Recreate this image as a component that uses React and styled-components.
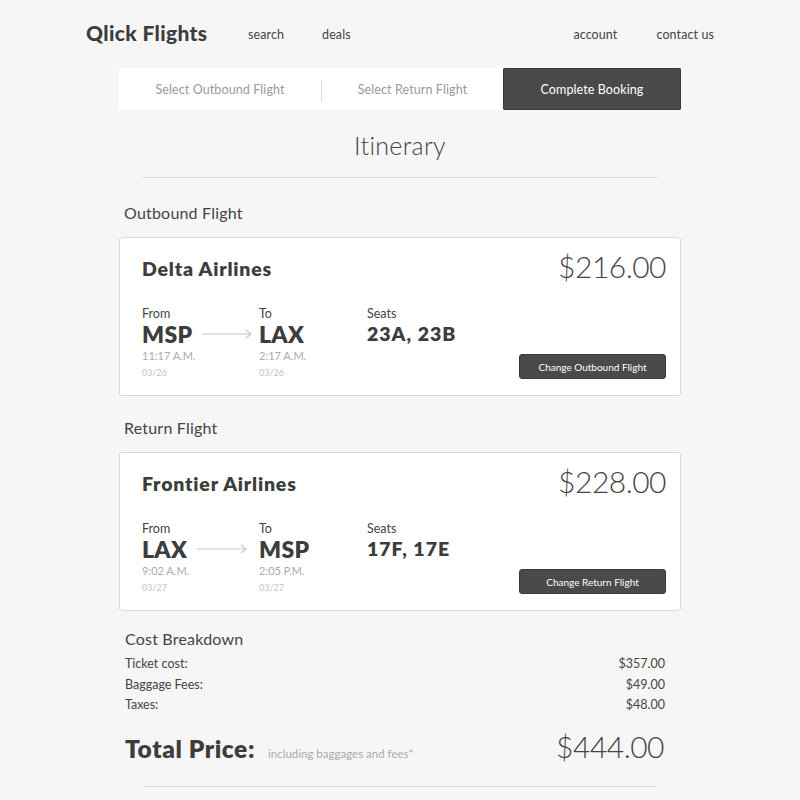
import React from "react";
import styled, { createGlobalStyle } from "styled-components";

const Global = createGlobalStyle`
  html, body { margin: 0; padding: 0; background: #f6f6f6; }
  body { font-family: Lato, "Open Sans", "Liberation Sans", sans-serif; color: #444; }
  * { box-sizing: border-box; }
`;

const Page = styled.div`
  width: 800px;
  padding-top: 18px;
  display: flex;
  flex-direction: column;
  align-items: center;
`;

const Header = styled.header`
  width: 628px;
  display: flex;
  align-items: center;
  height: 28px;
`;

const Logo = styled.div`
  font-family: Lato, sans-serif;
  font-weight: 900;
  font-size: 21px;
  letter-spacing: 0.35px;
  color: #3d3d3d;
  width: 162px;
`;

const Nav = styled.nav`
  display: flex;
  gap: ${(p) => p.$gap}px;
  margin-left: ${(p) => p.$left || 0};
  padding-top: 4px;
`;

const NavLink = styled.a`
  font-size: 12.5px;
  letter-spacing: 0.1px;
  color: #444;
  text-decoration: none;
`;

const Stepper = styled.div`
  margin-top: 22px;
  width: 562px;
  height: 42px;
  display: grid;
  grid-template-columns: 202px 182px 178px;
  background: #fff;
`;

const Step = styled.div`
  display: flex;
  align-items: center;
  justify-content: center;
  font-size: 12.5px;
  letter-spacing: 0.1px;
  color: ${(p) => (p.$active ? "#fff" : "#9a9a9a")};
  background: ${(p) => (p.$active ? "#4a4a4a" : "transparent")};
  border-left: ${(p) => (p.$divider ? "1px solid #ddd" : "none")};
  ${(p) => p.$divider && "border-image: linear-gradient(#fff 12px, #ddd 12px, #ddd 33px, #fff 33px) 1;"}
  ${(p) => p.$active && "border-radius: 2px; box-shadow: inset 0 0 0 1px #3a3a3a;"}
`;

const Title = styled.h1`
  margin: 20px 0 0;
  font-weight: 300;
  font-size: 25px;
  color: #444;
  letter-spacing: 0.3px;
`;

const Rule = styled.hr`
  width: 514px;
  border: none;
  border-top: 1px solid #d8d8d8;
  margin: ${(p) => p.$mt}px 0 0;
`;

const Section = styled.section`
  width: 562px;
  display: flex;
  flex-direction: column;
`;

const SectionLabel = styled.h2`
  font-weight: 400;
  font-size: 16px;
  letter-spacing: 0.2px;
  margin: ${(p) => p.$mt}px 0 0 ${(p) => p.$ml || 5}px;
  color: #444;
  line-height: 20px;
`;

const Card = styled.div`
  margin-top: 14px;
  background: #fff;
  border: 1px solid #d9d9d9;
  border-radius: 3px;
  height: 159px;
  padding: 16px 14px 0 22px;
  display: grid;
  grid-template-columns: 1fr auto;
`;

const CardLeft = styled.div`
  display: flex;
  flex-direction: column;
`;

const Airline = styled.div`
  font-weight: 800;
  font-size: 19.5px;
  letter-spacing: 0.8px;
  color: #3d3d3d;
  margin-top: 3px;
`;

const Legs = styled.div`
  display: flex;
  margin-top: 26px;
`;

const Leg = styled.div`
  display: flex;
  flex-direction: column;
  width: ${(p) => p.$w}px;
`;

const Small = styled.div`
  font-size: 12.5px;
  color: #444;
  line-height: 15px;
`;

const Code = styled.div`
  font-weight: 800;
  font-size: 23px;
  letter-spacing: 0.3px;
  color: #3d3d3d;
  line-height: 26px;
  display: flex;
  align-items: center;
  gap: 9px;
`;

const Seats = styled.div`
  font-weight: 800;
  font-size: 19.5px;
  color: #3d3d3d;
  line-height: 26px;
  letter-spacing: 1px;
`;

const Time = styled.div`
  font-size: 11px;
  color: #aaa;
  line-height: 15px;
  margin-top: 1px;
`;

const DateText = styled.div`
  font-size: 9px;
  color: #c4c4c4;
  line-height: 12px;
  margin-top: 4px;
`;

const CardRight = styled.div`
  display: flex;
  flex-direction: column;
  align-items: flex-end;
`;

const Price = styled.div`
  font-weight: 300;
  font-size: 30px;
  letter-spacing: -0.5px;
  color: #444;
  line-height: 24px;
`;

const Button = styled.button`
  margin-top: 76px;
  width: 147px;
  height: 25px;
  background: #4a4a4a;
  border: 1px solid #3a3a3a;
  border-radius: 3px;
  color: #fff;
  font-family: inherit;
  font-size: 10px;
`;

const Costs = styled.div`
  display: flex;
  flex-direction: column;
  margin: 5px 16px 0 6px;
`;

const CostRow = styled.div`
  display: flex;
  justify-content: space-between;
  font-size: 12.5px;
  color: #444;
  line-height: 20.5px;
`;

const TotalRow = styled.div`
  display: flex;
  align-items: baseline;
  margin: 12px 17px 0 6px;
`;

const TotalLabel = styled.div`
  font-weight: 800;
  font-size: 24.5px;
  letter-spacing: 0.6px;
  color: #3d3d3d;
`;

const TotalNote = styled.div`
  font-size: 11.5px;
  color: #aaa;
  margin-left: 13px;
`;

const TotalPrice = styled.div`
  margin-left: auto;
  font-weight: 300;
  font-size: 30px;
  letter-spacing: -0.5px;
  color: #444;
`;

const Arrow = () => (
  <svg width="52" height="10" viewBox="0 0 52 10">
    <path d="M1 5H50M45 1L50 5L45 9" stroke="#c8c8c8" strokeWidth="1.2" fill="none" />
  </svg>
);

const FlightCard = ({ airline, price, from, to, seats, button }) => (
  <Card>
    <CardLeft>
      <Airline>{airline}</Airline>
      <Legs>
        <Leg $w={117}>
          <Small>From</Small>
          <Code>
            {from.code}
            <Arrow />
          </Code>
          <Time>{from.time}</Time>
          <DateText>{from.date}</DateText>
        </Leg>
        <Leg $w={108}>
          <Small>To</Small>
          <Code>{to.code}</Code>
          <Time>{to.time}</Time>
          <DateText>{to.date}</DateText>
        </Leg>
        <Leg $w={120}>
          <Small>Seats</Small>
          <Seats>{seats}</Seats>
        </Leg>
      </Legs>
    </CardLeft>
    <CardRight>
      <Price>{price}</Price>
      <Button>{button}</Button>
    </CardRight>
  </Card>
);

export default function App() {
  return (
    <>
      <Global />
      <Page>
        <Header>
          <Logo>Qlick Flights</Logo>
          <Nav $gap={38}>
            <NavLink>search</NavLink>
            <NavLink>deals</NavLink>
          </Nav>
          <Nav $gap={39} $left="auto">
            <NavLink>account</NavLink>
            <NavLink>contact us</NavLink>
          </Nav>
        </Header>
        <Stepper>
          <Step>Select Outbound Flight</Step>
          <Step $divider>Select Return Flight</Step>
          <Step $active>Complete Booking</Step>
        </Stepper>
        <Title>Itinerary</Title>
        <Rule $mt={17} />
        <Section>
          <SectionLabel $mt={25}>Outbound Flight</SectionLabel>
          <FlightCard
            airline="Delta Airlines"
            price="$216.00"
            from={{ code: "MSP", time: "11:17 A.M.", date: "03/26" }}
            to={{ code: "LAX", time: "2:17 A.M.", date: "03/26" }}
            seats="23A, 23B"
            button="Change Outbound Flight"
          />
          <SectionLabel $mt={22}>Return Flight</SectionLabel>
          <FlightCard
            airline="Frontier Airlines"
            price="$228.00"
            from={{ code: "LAX", time: "9:02 A.M.", date: "03/27" }}
            to={{ code: "MSP", time: "2:05 P.M.", date: "03/27" }}
            seats="17F, 17E"
            button="Change Return Flight"
          />
          <SectionLabel $mt={18} $ml={6}>Cost Breakdown</SectionLabel>
          <Costs>
            <CostRow><span>Ticket cost:</span><span>$357.00</span></CostRow>
            <CostRow><span>Baggage Fees:</span><span>$49.00</span></CostRow>
            <CostRow><span>Taxes:</span><span>$48.00</span></CostRow>
          </Costs>
          <TotalRow>
            <TotalLabel>Total Price:</TotalLabel>
            <TotalNote>including baggages and fees*</TotalNote>
            <TotalPrice>$444.00</TotalPrice>
          </TotalRow>
        </Section>
        <Rule $mt={22} />
      </Page>
    </>
  );
}
